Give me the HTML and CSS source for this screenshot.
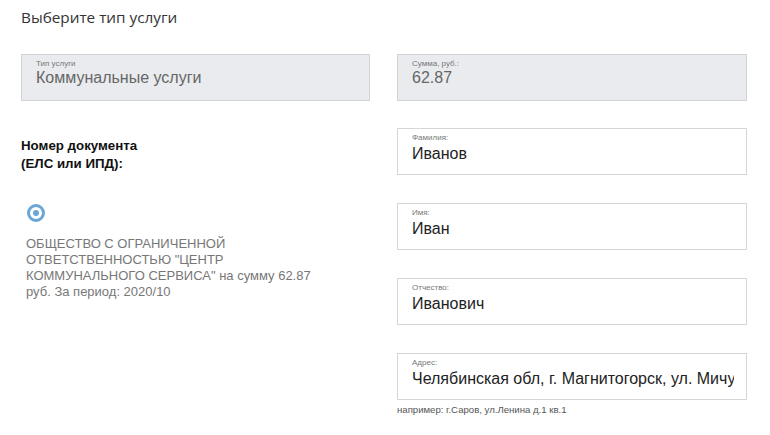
FILE: index.html
```html
<!DOCTYPE html>
<html lang="ru">
<head>
    <meta charset="UTF-8">
    <title>Выберите тип услуги</title>
    <link rel="stylesheet" href="styles.css">
</head>
<body>
    <div class="page">
        <h1 class="title">Выберите тип услуги</h1>
        <div class="row">
            <div class="field disabled">
                <div class="field-label">Тип услуги</div>
                <div class="field-value">Коммунальные услуги</div>
            </div>
            <div class="field disabled">
                <div class="field-label">Сумма, руб.:</div>
                <div class="field-value">62.87</div>
            </div>
        </div>
        <div class="row second">
            <div class="doc">
                <div class="doc-title">Номер документа<br>(ЕЛС или ИПД):</div>
                <span class="radio"></span>
                <div class="doc-text">ОБЩЕСТВО С ОГРАНИЧЕННОЙ ОТВЕТСТВЕННОСТЬЮ "ЦЕНТР КОММУНАЛЬНОГО СЕРВИСА" на сумму 62.87 руб. За период: 2020/10</div>
            </div>
            <div class="person">
                <div class="field">
                    <div class="field-label">Фамилия:</div>
                    <div class="field-value">Иванов</div>
                </div>
                <div class="field">
                    <div class="field-label">Имя:</div>
                    <div class="field-value">Иван</div>
                </div>
                <div class="field">
                    <div class="field-label">Отчество:</div>
                    <div class="field-value">Иванович</div>
                </div>
                <div>
                    <div class="field">
                        <div class="field-label">Адрес:</div>
                        <div class="field-value">Челябинская обл, г. Магнитогорск, ул. Мичурина</div>
                    </div>
                    <div class="hint">например: г.Саров, ул.Ленина д.1 кв.1</div>
                </div>
            </div>
        </div>
    </div>
</body>
</html>
```

FILE: styles.css
```css
html, body {
    margin: 0;
    background: #fff;
    font-family: 'Liberation Sans', Arial, sans-serif;
    overflow: hidden;
}
.page {
    padding: 0 22px 0 21px;
}
.title {
    font-family: 'Open Sans', sans-serif;
    font-size: 15.3px;
    font-weight: 400;
    color: #333;
    margin: 0;
    padding-top: 6px;
    height: 48px;
    line-height: 22px;
}
.row {
    display: grid;
    grid-template-columns: 349px 350px;
    column-gap: 27px;
}
.row.second {
    margin-top: 27px;
}
.field {
    height: 47px;
    box-sizing: border-box;
    border: 1px solid #d6d6d6;
    background: #fff;
    padding: 4px 12px 0 14px;
}
.field.disabled {
    background: #e9ebee;
    border-color: #d0d2d5;
}
.field-label {
    font-size: 8px;
    line-height: 10px;
    color: #777;
}
.field-value {
    font-size: 16px;
    line-height: 21px;
    color: #222;
    white-space: nowrap;
    overflow: hidden;
}
.field.disabled .field-value {
    font-size: 16px;
    line-height: 18px;
    color: #666;
}
.doc {
    padding-top: 9px;
}
.doc-title {
    font-size: 13.3px;
    font-weight: 700;
    line-height: 18px;
    color: #111;
}
.radio {
    display: block;
    width: 12px;
    height: 12px;
    border: 3px solid #6aa6d8;
    border-radius: 50%;
    margin: 31px 0 0 6px;
    position: relative;
}
.radio::after {
    content: "";
    position: absolute;
    left: 3px;
    top: 3px;
    width: 6px;
    height: 6px;
    border-radius: 50%;
    background: #6aa6d8;
}
.doc-text {
    margin: 14px 0 0 5px;
    width: 300px;
    font-size: 13px;
    line-height: 16px;
    color: #777;
}
.person {
    display: flex;
    flex-direction: column;
    gap: 28px;
}
.hint {
    font-size: 9.6px;
    color: #555;
    margin-top: 4px;
}
```
